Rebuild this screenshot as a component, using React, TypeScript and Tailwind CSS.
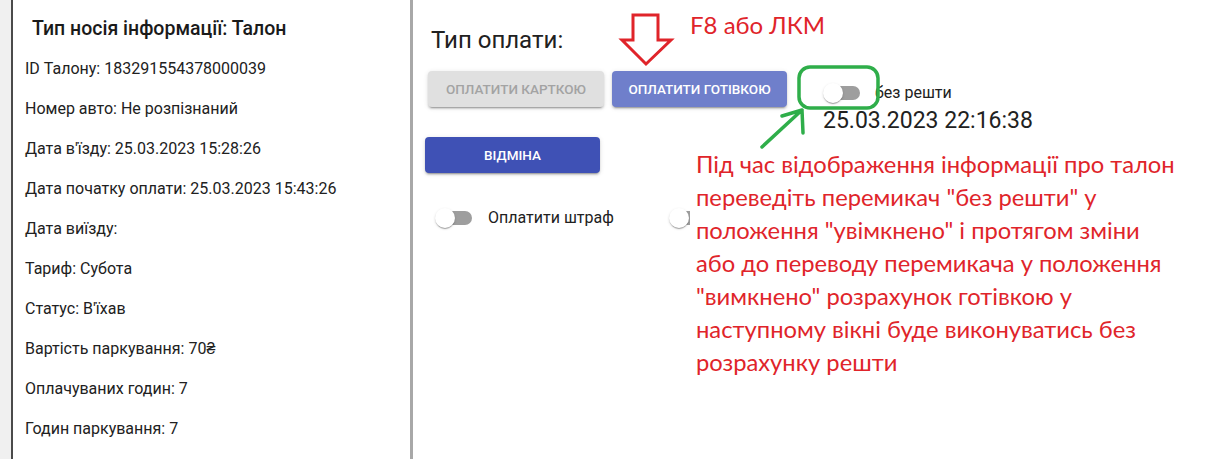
import React from "react";

const info = [
  "ID Талону: 183291554378000039",
  "Номер авто: Не розпізнаний",
  "Дата в'їзду: 25.03.2023 15:28:26",
  "Дата початку оплати: 25.03.2023 15:43:26",
  "Дата виїзду:",
  "Тариф: Субота",
  "Статус: В'їхав",
  "Вартість паркування: 70₴",
  "Оплачуваних годин: 7",
  "Годин паркування: 7",
];

const note = [
  "Під час відображення інформації про талон",
  "переведіть перемикач \"без решти\" у",
  "положення \"увімкнено\" і протягом зміни",
  "або до переводу перемикача у положення",
  "\"вимкнено\" розрахунок готівкою у",
  "наступному вікні буде виконуватись без",
  "розрахунку решти",
];

function Switch() {
  return (
    <div className="relative w-[40px] h-[20px] flex-none">
      <div className="absolute left-[3px] top-[3px] w-[34px] h-[14px] rounded-full bg-[#9e9e9e]" />
      <div className="absolute left-0 top-0 w-[20px] h-[20px] rounded-full bg-white shadow-[0_2px_1px_-1px_rgba(0,0,0,0.2),0_1px_1px_0_rgba(0,0,0,0.14),0_1px_3px_0_rgba(0,0,0,0.12)]" />
    </div>
  );
}

const btn =
  "h-[36px] rounded-[4px] flex items-center justify-center text-[13.5px] font-medium uppercase tracking-[0px] shadow-[0_3px_1px_-2px_rgba(0,0,0,0.2),0_2px_2px_0_rgba(0,0,0,0.14),0_1px_5px_0_rgba(0,0,0,0.12)]";

export default function App() {
  return (
    <div className="relative w-[1220px] h-[459px] overflow-hidden flex bg-white font-['Roboto',sans-serif] text-[#212121]">
      {/* Left strip */}
      <div className="w-[11px] flex-none bg-[#f0f0f0]" />

      {/* Ticket info */}
      <div className="w-[402px] flex-none border-l-2 border-l-[#4a4a4a] border-r-[3px] border-r-[#a8a8a8] bg-white pt-[16px]">
        <h1 className="pl-[19px] text-[19.5px] leading-[26px] font-medium text-[#1a1a1a]">Тип носія інформації: Талон</h1>
        <div className="mt-[15px] flex flex-col gap-[16px] pl-[12px]">
          {info.map((t) => (
            <p key={t} className="text-[16px] leading-[24px]">{t}</p>
          ))}
        </div>
      </div>

      {/* Payment */}
      <div className="flex-1 pt-[25px] pl-[15px]">
        <h2 className="pl-[3px] text-[24px] leading-[30px]">Тип оплати:</h2>

        <div className="mt-[16px] flex items-start">
          <div className={`${btn} w-[176px] bg-[#e0e0e0] text-[#a3a3a3]`}>Оплатити карткою</div>
          <div className={`${btn} ml-[8px] w-[175px] bg-[#6f7fcb] text-white`}>Оплатити готівкою</div>
          <div className="ml-[36px] mt-[12px] flex flex-col">
            <div className="flex items-center h-[20px]">
              <Switch />
              <span className="ml-[12px] text-[16px]">без решти</span>
            </div>
            <div className="mt-[4px] text-[23px] leading-[28px]">25.03.2023 22:16:38</div>
          </div>
        </div>

        <div className={`${btn} mt-[2px] -ml-[3px] w-[175px] bg-[#3f51b5] text-white`}>Відміна</div>

        <div className="mt-[35px] ml-[7px] flex items-center h-[20px]">
          <Switch />
          <span className="ml-[13px] text-[16px]">Оплатити штраф</span>
          <div className="ml-[55px]">
            <Switch />
          </div>
        </div>
      </div>

      {/* Annotations */}
      <div className="absolute left-[690px] top-[9px] font-['Lato',sans-serif] text-[24px] leading-[32px] text-[#e0242a]">
        F8 або ЛКМ
      </div>
      <div className="absolute left-[690px] top-[148px] bg-white pl-[6px] pr-[4px] font-['Lato',sans-serif] text-[23.75px] leading-[33px] text-[#e0242a]">
        {note.map((l) => (
          <div key={l}>{l}</div>
        ))}
      </div>
      <svg className="absolute left-0 top-0 pointer-events-none" width="1220" height="459" viewBox="0 0 1220 459">
        <polygon
          points="633,15 658,15 658,40 671,40 646,64 622,40 633,40"
          fill="none"
          stroke="#e0242a"
          strokeWidth="3"
          strokeLinejoin="miter"
        />
        <rect x="799" y="67" width="79" height="41" rx="11" fill="none" stroke="#2fae4a" strokeWidth="3.5" />
        <path d="M762 147 L802 110 M802 110 L782 116 M802 110 L803 133" fill="none" stroke="#2fae4a" strokeWidth="3.5" strokeLinecap="round" />
      </svg>
    </div>
  );
}
